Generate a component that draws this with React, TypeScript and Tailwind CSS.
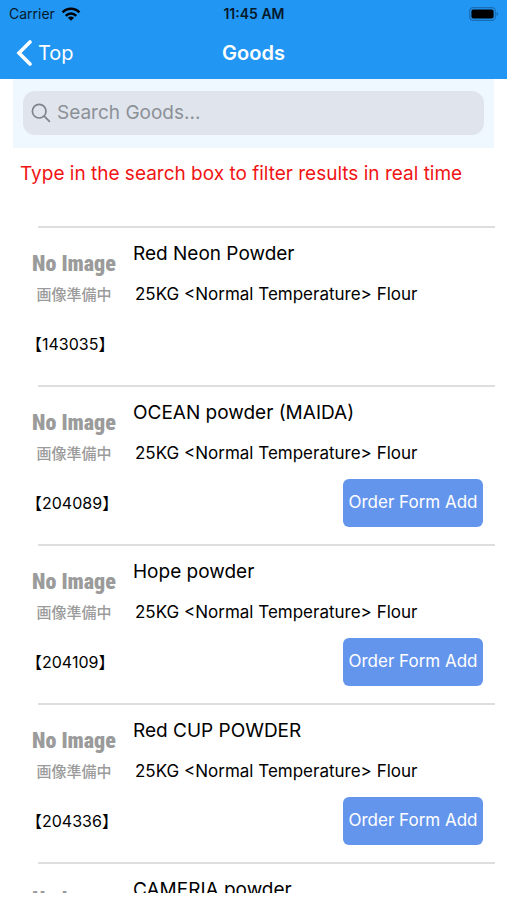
import React from 'react';

interface Goods {
    code: string;
    name: string;
    detail: string;
    canOrder: boolean;
}

const goods: Goods[] = [
    { code: '143035', name: 'Red Neon Powder', detail: '25KG <Normal Temperature> Flour', canOrder: false },
    { code: '204089', name: 'OCEAN powder (MAIDA)', detail: '25KG <Normal Temperature> Flour', canOrder: true },
    { code: '204109', name: 'Hope powder', detail: '25KG <Normal Temperature> Flour', canOrder: true },
    { code: '204336', name: 'Red CUP POWDER', detail: '25KG <Normal Temperature> Flour', canOrder: true },
    { code: '204350', name: 'CAMERIA powder', detail: '25KG <Normal Temperature> Flour', canOrder: true },
];

const StatusBar: React.FC = () => (
    <div className="grid grid-cols-3 items-center h-7 pl-[9px] pr-2 text-sm text-[#06192b]">
        <div className="flex items-center gap-1.5">
            <span>Carrier</span>
            <svg className="w-5 h-[14px]" viewBox="0 0 20 14" fill="none" stroke="#000" strokeWidth="2.6">
                <path d="M1.6 5.4C6.2.6 13.8.6 18.4 5.4" />
                <path d="M4.8 8.8C7.7 5.8 12.3 5.8 15.2 8.8" />
                <path d="M10 13.8L6.9 10.7C8.6 9 11.4 9 13.1 10.7Z" fill="#000" stroke="none" />
            </svg>
        </div>
        <div className="text-center font-semibold whitespace-nowrap">11:45 AM</div>
        <svg className="justify-self-end w-[30px] h-[14px]" viewBox="0 0 30 14">
            <rect x="0.7" y="0.7" width="25.6" height="12.6" rx="3.6" fill="none" stroke="#1a6db3" strokeWidth="1.2" />
            <rect x="2.4" y="2.4" width="22.2" height="9.2" rx="2" fill="#000" />
            <path d="M27.6 4.8c1.9.7 1.9 3.7 0 4.4z" fill="#1a6db3" />
        </svg>
    </div>
);

const NoImage: React.FC = () => (
    <div className="w-[92px] pt-[22px] text-center text-[#9b9b9b]">
        <div className="font-['Roboto_Condensed','Roboto',sans-serif] font-black text-[22px] leading-7">No Image</div>
        <div className="font-['Noto_Sans_CJK_JP',sans-serif] font-medium text-[15px] leading-8">画像準備中</div>
    </div>
);

const GoodsRow: React.FC<{ item: Goods }> = ({ item }) => (
    <li className="h-[159px]">
        <div className="ml-[38px] mr-3 h-[2px] bg-[#dedede]"></div>
        <div className="flex h-20 pl-7 pr-6">
            <NoImage />
            <div className="pl-[13px] pt-3">
                <h2 className="text-[19px] leading-7">{item.name}</h2>
                <p className="pl-[2px] pt-3 text-[17px] leading-7">{item.detail}</p>
            </div>
        </div>
        <div className="flex items-center justify-between h-12 mt-3 pl-[26px] pr-6">
            <span className="text-base">【{item.code}】</span>
            {item.canOrder && (
                <button type="button" className="h-12 w-[140px] rounded-md bg-[#6495ed] text-white text-[17px] whitespace-nowrap">
                    Order Form Add
                </button>
            )}
        </div>
    </li>
);

const App: React.FC = () => {
    return (
        <div className="h-screen flex flex-col pb-[7px] bg-white text-black font-['Inter','Noto_Sans_CJK_JP',sans-serif]">
            <header className="bg-[#2196f3] shrink-0">
                <StatusBar />
                <nav className="grid grid-cols-3 items-center h-[51px] px-4 pb-[2px] text-white">
                    <a href="#top" className="flex items-center gap-1.5 text-xl">
                        <svg className="w-4 h-[26px]" viewBox="0 0 16 26" fill="none" stroke="currentColor" strokeWidth="3.6" strokeLinecap="round">
                            <path d="M14 2L3 13L14 24" />
                        </svg>
                        Top
                    </a>
                    <h1 className="text-center font-semibold text-xl">Goods</h1>
                </nav>
            </header>

            <div className="mx-[13px] px-[10px] pt-3 pb-[13px] bg-[#f0f8ff] shrink-0">
                <label className="flex items-center gap-1.5 h-11 px-2 rounded-xl bg-[#e0e5ed]">
                    <svg className="w-5 h-5 shrink-0" viewBox="0 0 20 20" fill="none" stroke="#7f838a" strokeWidth="1.7" strokeLinecap="round">
                        <circle cx="8.2" cy="8.2" r="6.8" />
                        <path d="M13.2 13.2L18.4 18.4" />
                    </svg>
                    <input
                        type="search"
                        aria-label="Search Goods"
                        placeholder="Search Goods..."
                        className="flex-1 min-w-0 bg-transparent text-[19px] outline-none placeholder:text-[#8c9097]"
                    />
                </label>
            </div>

            <p className="pl-5 pt-3 pb-[38px] text-[19px] leading-7 text-[#f01414] shrink-0">
                Type in the search box to filter results in real time
            </p>

            <ul className="flex-1 min-h-0 overflow-hidden">
                {goods.map((item) => (
                    <GoodsRow key={item.code} item={item} />
                ))}
            </ul>
        </div>
    );
};

export default App;
